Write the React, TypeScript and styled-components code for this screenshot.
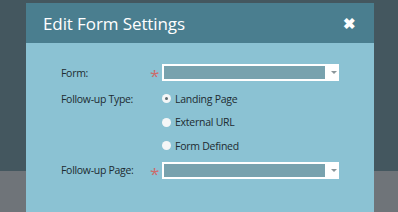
import React from 'react'
import styled, { createGlobalStyle } from 'styled-components'

const GlobalStyle = createGlobalStyle`
  html, body {
    margin: 0;
    padding: 0;
    width: 398px;
    height: 212px;
    overflow: hidden;
    font-family: "Open Sans", "Liberation Sans", sans-serif;
  }
`

const Page = styled.div`
  position: relative;
  width: 398px;
  height: 212px;
  display: flex;
  flex-direction: column;
  overflow: hidden;
`

const Backdrop = styled.div<{ $tone: 'dark' | 'gray'; $h: number }>`
  height: ${({ $h }) => $h}px;
  flex: ${({ $tone }) => ($tone === 'gray' ? 1 : 'none')};
  background: ${({ $tone }) => ($tone === 'dark' ? '#44575f' : '#6f7479')};
`

const Dialog = styled.div`
  position: absolute;
  left: 26px;
  top: 3px;
  width: 348px;
  height: 230px;
  display: flex;
  flex-direction: column;
  background: #8bc2d3;
`

const Header = styled.div`
  height: 40px;
  flex: none;
  display: flex;
  align-items: center;
  justify-content: space-between;
  padding: 0 18px 0 17px;
  background: #4a7e8f;
`

const Title = styled.h1`
  margin: 0;
  font-size: 17px;
  font-weight: 400;
  color: #ffffff;
  letter-spacing: -0.1px;
`

const Close = styled.span`
  color: #ffffff;
  font-size: 15px;
  font-weight: 700;
  line-height: 1;
`

const Body = styled.div`
  padding: 18px 0 0 35px;
  display: flex;
  flex-direction: column;
`

const Row = styled.div<{ $h: number; $top?: boolean }>`
  display: grid;
  grid-template-columns: 89px 12px 1fr;
  align-items: ${({ $top }) => ($top ? 'start' : 'center')};
  height: ${({ $h }) => $h}px;
  padding-top: ${({ $top }) => ($top ? 4 : 0)}px;
  box-sizing: border-box;
`

const Label = styled.span<{ $top?: boolean }>`
  font-size: 10.5px;
  color: #1d2b31;
  letter-spacing: -0.3px;
  height: ${({ $top }) => ($top ? '23.5px' : 'auto')};
  display: flex;
  align-items: center;
`

const Req = styled.span`
  color: #cc6b6b;
  font-size: 17px;
  line-height: 1;
  padding-top: 6px;
`

const Select = styled.div`
  width: 177px;
  height: 17px;
  box-sizing: border-box;
  background: #ffffff;
  padding: 2px;
  display: flex;
  align-items: center;
  gap: 4px;
`

const SelectFill = styled.div`
  width: 161px;
  height: 13px;
  background: #78a2ae;
`

const Caret = styled.span`
  width: 0;
  height: 0;
  margin-left: 2px;
  border-left: 3px solid transparent;
  border-right: 3px solid transparent;
  border-top: 3px solid #8a9599;
`

const Options = styled.div`
  display: flex;
  flex-direction: column;
`

const Radio = styled.label`
  display: flex;
  align-items: center;
  gap: 4px;
  height: 23.5px;
  font-size: 10.5px;
  color: #1d2b31;
  letter-spacing: -0.25px;
`

const Dot = styled.span<{ $on?: boolean }>`
  width: 9px;
  height: 9px;
  border-radius: 50%;
  background: #f4f6f7;
  display: flex;
  align-items: center;
  justify-content: center;
  &::after {
    content: '';
    width: 3px;
    height: 3px;
    border-radius: 50%;
    background: ${({ $on }) => ($on ? '#5d6b70' : 'transparent')};
  }
`

const App: React.FC = () => {
  const types = [
    { label: 'Landing Page', on: true },
    { label: 'External URL', on: false },
    { label: 'Form Defined', on: false },
  ]

  return (
    <Page>
      <GlobalStyle />
      <Backdrop $tone="dark" $h={171} />
      <Backdrop $tone="gray" $h={41} />
      <Dialog>
        <Header>
          <Title>Edit Form Settings</Title>
          <Close>✖</Close>
        </Header>
        <Body>
          <Row $h={22}>
            <Label>Form:</Label>
            <Req>*</Req>
            <Select>
              <SelectFill />
              <Caret />
            </Select>
          </Row>
          <Row $h={74.5} $top>
            <Label $top>Follow-up Type:</Label>
            <span />
            <Options>
              {types.map((t) => (
                <Radio key={t.label}>
                  <Dot $on={t.on} />
                  {t.label}
                </Radio>
              ))}
            </Options>
          </Row>
          <Row $h={25}>
            <Label>Follow-up Page:</Label>
            <Req>*</Req>
            <Select>
              <SelectFill />
              <Caret />
            </Select>
          </Row>
        </Body>
      </Dialog>
    </Page>
  )
}

export default App
